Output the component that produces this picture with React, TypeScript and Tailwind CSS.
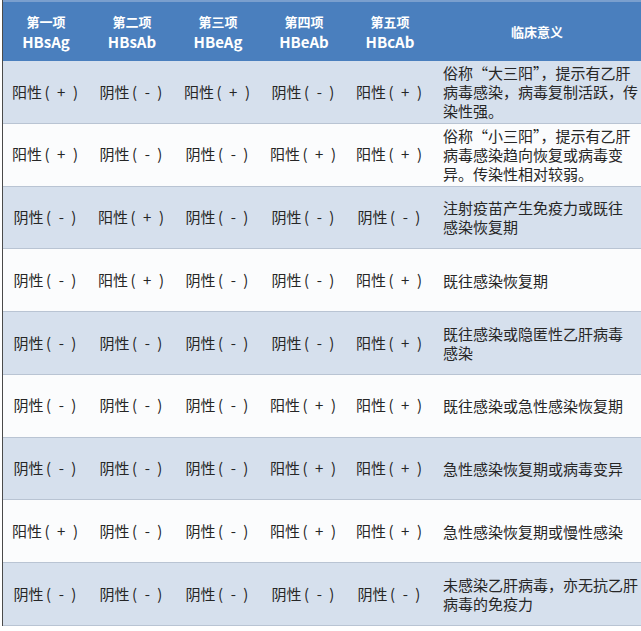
const POS = "阳性\u2006(\u2002+\u2002)"
const NEG = "阴性\u2006(\u2002-\u2002)"

const headers = [
  ["第一项", "HBsAg"],
  ["第二项", "HBsAb"],
  ["第三项", "HBeAg"],
  ["第四项", "HBeAb"],
  ["第五项", "HBcAb"],
]

const rows: { v: boolean[]; note: string[] }[] = [
  { v: [true, false, true, false, true], note: ["俗称“大三阳”，提示有乙肝", "病毒感染，病毒复制活跃，传", "染性强。"] },
  { v: [true, false, false, true, true], note: ["俗称“小三阳”，提示有乙肝", "病毒感染趋向恢复或病毒变", "异。传染性相对较弱。"] },
  { v: [false, true, false, false, false], note: ["注射疫苗产生免疫力或既往", "感染恢复期"] },
  { v: [false, true, false, false, true], note: ["既往感染恢复期"] },
  { v: [false, false, false, false, true], note: ["既往感染或隐匿性乙肝病毒", "感染"] },
  { v: [false, false, false, true, true], note: ["既往感染或急性感染恢复期"] },
  { v: [false, false, false, true, true], note: ["急性感染恢复期或病毒变异"] },
  { v: [true, false, false, true, true], note: ["急性感染恢复期或慢性感染"] },
  { v: [false, false, false, false, false], note: ["未感染乙肝病毒，亦无抗乙肝", "病毒的免疫力"] },
]

const cols = "grid grid-cols-[86px_86px_86px_86px_86px_1fr]"

export default function App() {
  return (
    <div
      className="h-[631px] w-[641px] overflow-hidden bg-white pl-[2px]"
      style={{ fontFamily: '"Noto Sans CJK SC", "Noto Sans", sans-serif' }}
    >
      <div className="border-l-[1.5px] border-[#4a4a4a]">
        <div className={`${cols} h-[61px] border-t-2 border-[#7a9fce] bg-[#4a7fbe] text-white font-bold`}>
          {headers.map(([a, b]) => (
            <div key={b} className="flex flex-col items-center justify-center">
              <span className="text-[13px] leading-[20px]">{a}</span>
              <span className="text-[15px] leading-[20px]">{b}</span>
            </div>
          ))}
          <div className="flex items-center justify-center text-[13px]">临床意义</div>
        </div>
        {rows.map((r, i) => (
          <div
            key={i}
            className={`${cols} h-[62.75px] border-b-[1.5px] border-[#b9c4d3] text-[15px] text-[#262626] ${
              i % 2 === 0 ? "bg-[#d6e0ed]" : "bg-[#fbfcfd]"
            }`}
          >
            {r.v.map((p, j) => (
              <div key={j} className="flex items-center justify-center whitespace-pre pr-[2px]">
                {p ? POS : NEG}
              </div>
            ))}
            <div className="flex flex-col justify-center pl-[10px] leading-[19px]">
              {r.note.map((t) => (
                <span key={t} className="whitespace-nowrap">{t}</span>
              ))}
            </div>
          </div>
        ))}
      </div>
    </div>
  )
}
